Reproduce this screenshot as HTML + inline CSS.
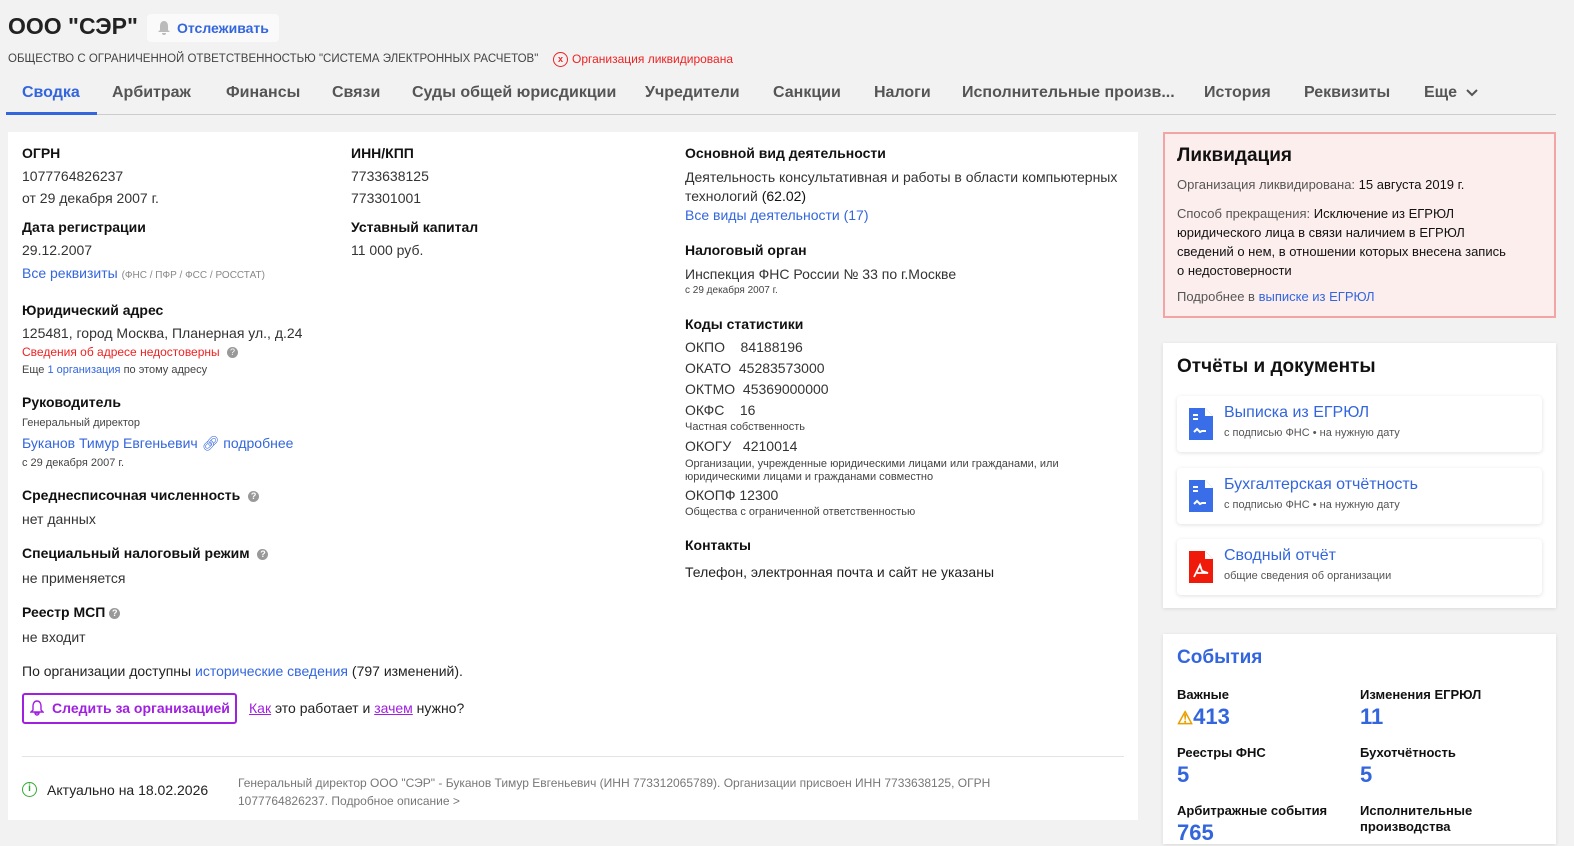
<!DOCTYPE html>
<html><head><meta charset="utf-8"><style>
*{margin:0;padding:0;box-sizing:border-box}
body{width:1574px;height:835px;overflow:hidden;background:#f2f2f2;font-family:"Liberation Sans",sans-serif;color:#222;position:relative}
.a{position:absolute;white-space:nowrap}
.h{font-weight:bold;font-size:14px;color:#111}
.t{font-size:14px;color:#333}
.s{font-size:11px;color:#444}
.l{color:#3366dd}
.tab{position:absolute;top:84px;font-size:16px;font-weight:bold;color:#555}
.card{position:absolute;background:#fff}
.q{display:inline-block;width:11px;height:11px;border-radius:50%;background:#999;color:#fff;font-size:9px;text-align:center;line-height:11px;vertical-align:1px;margin-left:4px}
.doc{position:absolute;left:1177px;width:365px;height:56px;background:#fff;border-radius:4px;box-shadow:0 1px 4px rgba(0,0,0,.12)}
.doc .ic{position:absolute;left:12px;top:12px;width:24px;height:32px}
.doc .tt{position:absolute;left:47px;top:8px;font-size:16px;color:#3366dd}
.doc .st{position:absolute;left:47px;top:31px;font-size:11px;color:#555}
</style></head><body>
<div class="a" style="left:8px;top:13px;font-size:23px;font-weight:bold;color:#222">ООО "СЭР"</div>
<div class="a" style="left:147px;top:14px;width:132px;height:28px;background:#fafafa;border-radius:4px"></div>
<svg class="a" style="left:157px;top:20px" width="14" height="16" viewBox="0 0 14 16"><path d="M7 1C4 1 3 4 3 6v4l-2 2h12l-2-2V6c0-2-1-5-4-5zM5 13a2 2 0 004 0z" fill="#bbb"/></svg>
<div class="a" style="left:177px;top:20px;font-size:14px;font-weight:bold;color:#3366dd">Отслеживать</div>
<div class="a" style="left:8px;top:53px;font-size:11.5px;color:#444">ОБЩЕСТВО С ОГРАНИЧЕННОЙ ОТВЕТСТВЕННОСТЬЮ "СИСТЕМА ЭЛЕКТРОННЫХ РАСЧЕТОВ"</div>
<div class="a" style="left:553px;top:52px;width:15px;height:15px;border:1.5px solid #e22;border-radius:50%;color:#e22;font-size:9px;text-align:center;line-height:12px;font-weight:bold">x</div>
<div class="a" style="left:572px;top:52px;font-size:12px;color:#e22">Организация ликвидирована</div>

<div class="tab" style="left:22px;color:#3366dd">Сводка</div>
<div class="tab" style="left:112px">Арбитраж</div>
<div class="tab" style="left:226px">Финансы</div>
<div class="tab" style="left:332px">Связи</div>
<div class="tab" style="left:412px">Суды общей юрисдикции</div>
<div class="tab" style="left:645px">Учредители</div>
<div class="tab" style="left:773px">Санкции</div>
<div class="tab" style="left:874px">Налоги</div>
<div class="tab" style="left:962px">Исполнительные произв...</div>
<div class="tab" style="left:1204px">История</div>
<div class="tab" style="left:1304px">Реквизиты</div>
<div class="tab" style="left:1424px">Еще</div>
<svg class="a" style="left:1465px;top:88px" width="14" height="10" viewBox="0 0 14 10"><path d="M2 2l5 5 5-5" stroke="#555" stroke-width="2" fill="none"/></svg>
<div class="a" style="left:6px;top:114px;width:1550px;height:1px;background:#ccc"></div>
<div class="a" style="left:6px;top:112px;width:91px;height:3px;background:#3366dd"></div>

<div class="card" style="left:8px;top:132px;width:1130px;height:688px"></div>
<div class="a h" style="left:22px;top:145px">ОГРН</div>
<div class="a t" style="left:22px;top:168px">1077764826237</div>
<div class="a t" style="left:22px;top:190px">от 29 декабря 2007 г.</div>
<div class="a h" style="left:22px;top:219px">Дата регистрации</div>
<div class="a t" style="left:22px;top:242px">29.12.2007</div>
<div class="a t" style="left:22px;top:265px"><span class="l">Все реквизиты</span> <span style="font-size:10px;color:#888">(ФНС / ПФР / ФСС / РОССТАТ)</span></div>
<div class="a h" style="left:22px;top:302px">Юридический адрес</div>
<div class="a t" style="left:22px;top:325px">125481, город Москва, Планерная ул., д.24</div>
<div class="a" style="left:22px;top:345px;font-size:12px;color:#e22">Сведения об адресе недостоверны <span class="q">?</span></div>
<div class="a s" style="left:22px;top:364px">Еще <span class="l">1 организация</span> по этому адресу</div>
<div class="a h" style="left:22px;top:394px">Руководитель</div>
<div class="a s" style="left:22px;top:417px">Генеральный директор</div>
<div class="a t" style="left:22px;top:435px"><span class="l">Буканов Тимур Евгеньевич</span> <span class="l">&#128279;&#xFE0E; подробнее</span></div>
<div class="a s" style="left:22px;top:457px">с 29 декабря 2007 г.</div>
<div class="a h" style="left:22px;top:487px">Среднесписочная численность <span class="q">?</span></div>
<div class="a t" style="left:22px;top:511px">нет данных</div>
<div class="a h" style="left:22px;top:545px">Специальный налоговый режим <span class="q">?</span></div>
<div class="a t" style="left:22px;top:570px">не применяется</div>
<div class="a h" style="left:22px;top:604px">Реестр МСП<span class="q">?</span></div>
<div class="a t" style="left:22px;top:629px">не входит</div>
<div class="a t" style="left:22px;top:663px;color:#222">По организации доступны <span class="l">исторические сведения</span> (797 изменений).</div>
<div class="a" style="left:22px;top:693px;width:215px;height:31px;border:2px solid #a020e0;border-radius:3px;color:#a020e0;font-size:14px;font-weight:bold;padding:5px 0 0 28px">Следить за организацией</div>
<svg class="a" style="left:30px;top:700px" width="14" height="16" viewBox="0 0 14 16"><path d="M7 1C4 1 3 4 3 6v4l-2 2h12l-2-2V6c0-2-1-5-4-5zM5 13a2 2 0 004 0z" fill="none" stroke="#a020e0" stroke-width="1.4"/></svg>
<div class="a t" style="left:249px;top:700px;color:#222"><u style="color:#a020e0">Как</u> это работает и <u style="color:#a020e0">зачем</u> нужно?</div>

<div class="a h" style="left:351px;top:145px">ИНН/КПП</div>
<div class="a t" style="left:351px;top:168px">7733638125</div>
<div class="a t" style="left:351px;top:190px">773301001</div>
<div class="a h" style="left:351px;top:219px">Уставный капитал</div>
<div class="a t" style="left:351px;top:242px">11 000 руб.</div>

<div class="a h" style="left:685px;top:145px">Основной вид деятельности</div>
<div class="a t" style="left:685px;top:169px">Деятельность консультативная и работы в области компьютерных</div>
<div class="a t" style="left:685px;top:188px">технологий <span style="color:#111">(62.02)</span></div>
<div class="a t l" style="left:685px;top:207px">Все виды деятельности (17)</div>
<div class="a h" style="left:685px;top:242px">Налоговый орган</div>
<div class="a t" style="left:685px;top:266px">Инспекция ФНС России № 33 по г.Москве</div>
<div class="a s" style="left:685px;top:285px;font-size:10px">с 29 декабря 2007 г.</div>
<div class="a h" style="left:685px;top:316px">Коды статистики</div>
<div class="a t" style="left:685px;top:339px">ОКПО &nbsp;&nbsp;&nbsp;84188196</div>
<div class="a t" style="left:685px;top:360px">ОКАТО &nbsp;45283573000</div>
<div class="a t" style="left:685px;top:381px">ОКТМО &nbsp;45369000000</div>
<div class="a t" style="left:685px;top:402px">ОКФС &nbsp;&nbsp;&nbsp;16</div>
<div class="a s" style="left:685px;top:421px">Частная собственность</div>
<div class="a t" style="left:685px;top:438px">ОКОГУ &nbsp;&nbsp;4210014</div>
<div class="a s" style="left:685px;top:458px">Организации, учрежденные юридическими лицами или гражданами, или</div>
<div class="a s" style="left:685px;top:471px">юридическими лицами и гражданами совместно</div>
<div class="a t" style="left:685px;top:487px">ОКОПФ 12300</div>
<div class="a s" style="left:685px;top:506px">Общества с ограниченной ответственностью</div>
<div class="a h" style="left:685px;top:537px">Контакты</div>
<div class="a t" style="left:685px;top:564px;color:#222">Телефон, электронная почта и сайт не указаны</div>

<div class="a" style="left:22px;top:756px;width:1102px;height:1px;background:#e4e4e4"></div>
<div class="a" style="left:22px;top:782px;width:15px;height:15px;border:1.5px solid #3a3;border-radius:50%;color:#3a3;font-size:10px;text-align:center;line-height:12px;font-weight:bold">i</div>
<div class="a t" style="left:47px;top:782px;color:#222">Актуально на 18.02.2026</div>
<div class="a" style="left:238px;top:774px;font-size:12px;color:#777;line-height:18px">Генеральный директор ООО "СЭР" - Буканов Тимур Евгеньевич (ИНН 773312065789). Организации присвоен ИНН 7733638125, ОГРН<br>1077764826237. Подробное описание &gt;</div>

<div class="card" style="left:1163px;top:132px;width:393px;height:186px;background:#fdeeee;border:2px solid #f3a5a5"></div>
<div class="a" style="left:1177px;top:145px;font-size:19px;font-weight:bold;color:#111">Ликвидация</div>
<div class="a" style="left:1177px;top:177px;font-size:13px;color:#555">Организация ликвидирована: <span style="color:#111">15 августа 2019 г.</span></div>
<div class="a" style="left:1177px;top:204px;font-size:13px;color:#555;line-height:19px;white-space:normal;width:330px">Способ прекращения: <span style="color:#111">Исключение из ЕГРЮЛ юридического лица в связи наличием в ЕГРЮЛ сведений о нем, в отношении которых внесена запись о недостоверности</span></div>
<div class="a" style="left:1177px;top:289px;font-size:13px;color:#555">Подробнее в <span class="l">выписке из ЕГРЮЛ</span></div>

<div class="card" style="left:1163px;top:343px;width:393px;height:265px;box-shadow:0 1px 4px rgba(0,0,0,.1)"></div>
<div class="a" style="left:1177px;top:356px;font-size:19px;font-weight:bold;color:#111">Отчёты и документы</div>
<div class="doc" style="top:396px"><svg class="ic" viewBox="0 0 24 32"><path d="M0 0h16l8 8v24H0z" fill="#3a6ee8"/><path d="M16 0v8h8" fill="#fff"/><path d="M4 7h5M4 11h5M5 24l3-3 3 3 2-1h4" stroke="#fff" stroke-width="2" fill="none"/></svg><div class="tt">Выписка из ЕГРЮЛ</div><div class="st">с подписью ФНС • на нужную дату</div></div>
<div class="doc" style="top:468px"><svg class="ic" viewBox="0 0 24 32"><path d="M0 0h16l8 8v24H0z" fill="#3a6ee8"/><path d="M16 0v8h8" fill="#fff"/><path d="M4 7h5M4 11h5M5 24l3-3 3 3 2-1h4" stroke="#fff" stroke-width="2" fill="none"/></svg><div class="tt">Бухгалтерская отчётность</div><div class="st">с подписью ФНС • на нужную дату</div></div>
<div class="doc" style="top:539px"><svg class="ic" viewBox="0 0 24 32"><path d="M0 0h16l8 8v24H0z" fill="#f01a0a"/><path d="M16 0v8h8" fill="#fff"/><path d="M5 26l6-12 2 6 6 2H8" stroke="#fff" stroke-width="1.8" fill="none"/></svg><div class="tt">Сводный отчёт</div><div class="st">общие сведения об организации</div></div>

<div class="card" style="left:1163px;top:634px;width:393px;height:210px;box-shadow:0 1px 4px rgba(0,0,0,.1)"></div>
<div class="a" style="left:1177px;top:647px;font-size:19px;font-weight:bold;color:#3366dd">События</div>
<div class="a h" style="left:1177px;top:687px;font-size:13px">Важные</div>
<div class="a" style="left:1177px;top:704px;font-size:22px;font-weight:bold;color:#3366dd"><span style="color:#e8a000;font-size:18px">&#9888;</span>413</div>
<div class="a h" style="left:1360px;top:687px;font-size:13px">Изменения ЕГРЮЛ</div>
<div class="a" style="left:1360px;top:704px;font-size:22px;font-weight:bold;color:#3366dd">11</div>
<div class="a h" style="left:1177px;top:745px;font-size:13px">Реестры ФНС</div>
<div class="a" style="left:1177px;top:762px;font-size:22px;font-weight:bold;color:#3366dd">5</div>
<div class="a h" style="left:1360px;top:745px;font-size:13px">Бухотчётность</div>
<div class="a" style="left:1360px;top:762px;font-size:22px;font-weight:bold;color:#3366dd">5</div>
<div class="a h" style="left:1177px;top:803px;font-size:13px">Арбитражные события</div>
<div class="a" style="left:1177px;top:820px;font-size:22px;font-weight:bold;color:#3366dd">765</div>
<div class="a h" style="left:1360px;top:803px;font-size:13px;line-height:16px">Исполнительные<br>производства</div>
</body></html>
